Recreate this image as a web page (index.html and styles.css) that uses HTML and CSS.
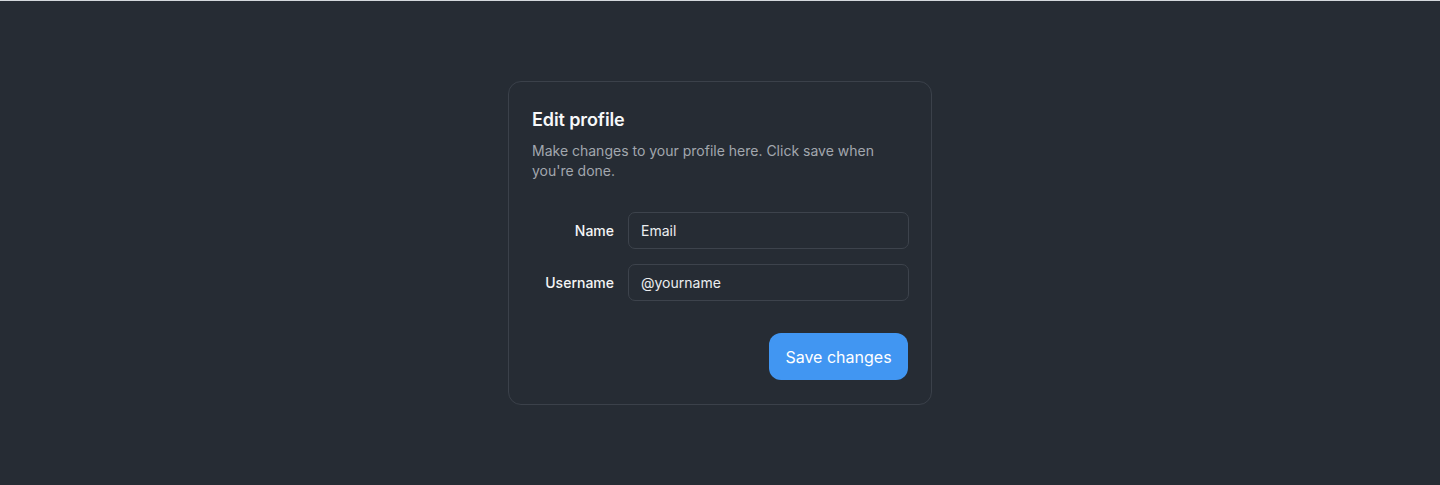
FILE: index.html
```html
<!DOCTYPE html>
<html lang="en">
<head>
<meta charset="utf-8">
<title>Edit profile</title>
<link rel="stylesheet" href="styles.css">
</head>
<body>
<main class="page">
  <section class="card">
    <header class="card-header">
      <h2 class="title">Edit profile</h2>
      <p class="desc">Make changes to your profile here. Click save when you're done.</p>
    </header>
    <form class="form">
      <div class="row">
        <label class="label" for="name">Name</label>
        <input class="input" id="name" value="Email">
      </div>
      <div class="row">
        <label class="label" for="username">Username</label>
        <input class="input" id="username" value="@yourname">
      </div>
    </form>
    <footer class="card-footer">
      <button class="btn" type="button">Save changes</button>
    </footer>
  </section>
</main>
</body>
</html>
```
FILE: styles.css
```css
* { box-sizing: border-box; }
html, body { margin: 0; padding: 0; }
body {
  background: #262c34;
  font-family: Inter, "Noto Sans", sans-serif;
  color: #f4f5f6;
  border-top: 1px solid #d4d8dc;
}
.page {
  height: 484px;
  display: flex;
  align-items: center;
  justify-content: center;
}
.card {
  width: 424px;
  border: 1px solid #3b414a;
  border-radius: 13px;
  background: #262c34;
  padding: 24px 23px 24px 23px;
  display: flex;
  flex-direction: column;
}
.title {
  margin: 0;
  font-size: 18px;
  line-height: 28px;
  font-weight: 600;
  color: #f7f8f9;
  letter-spacing: -0.1px;
}
.desc {
  margin: 7px 0 0;
  font-size: 14px;
  line-height: 20px;
  color: #a2a7ae;
}
.form {
  margin-top: 31px;
  display: flex;
  flex-direction: column;
  gap: 15px;
}
.row {
  display: grid;
  grid-template-columns: 82px 1fr;
  column-gap: 14px;
  align-items: center;
}
.label {
  text-align: right;
  font-size: 14px;
  font-weight: 500;
  color: #f4f5f6;
}
.input {
  height: 37px;
  width: calc(100% + 1px);
  border: 1px solid #3d434c;
  border-radius: 7px;
  background: #262c34;
  color: #eceef0;
  font-family: inherit;
  font-size: 14px;
  padding: 0 12px;
  outline: none;
}
.card-footer {
  margin-top: 32px;
  display: flex;
  justify-content: flex-end;
}
.btn {
  height: 47px;
  width: 139px;
  border: none;
  border-radius: 12px;
  background: #4196f2;
  color: #ffffff;
  font-family: inherit;
  font-size: 16px;
  font-weight: 400;
  cursor: pointer;
}
```
